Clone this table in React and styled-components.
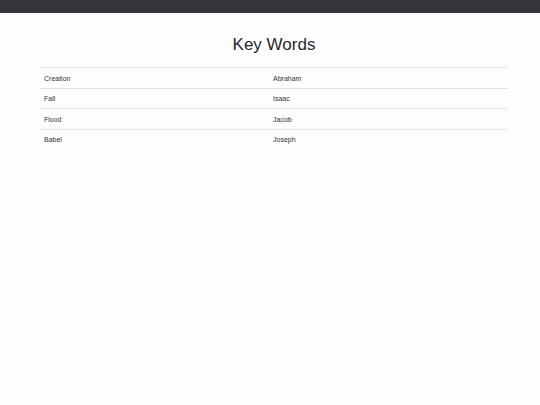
import React from 'react'
import styled, { createGlobalStyle } from 'styled-components'

const GlobalStyle = createGlobalStyle`
    html, body {
        margin: 0;
        padding: 0;
        background: #fdfdfd;
        font-family: "Liberation Sans", Arial, sans-serif;
        color: #212529;
    }
`

const TopBar = styled.div`
    height: 13px;
    background: #35373c;
`

const Container = styled.div`
    padding: 0 32px 0 40px;
`

const Title = styled.h1`
    margin: 22px 0 12px 0;
    font-size: 17px;
    font-weight: 400;
    line-height: 20px;
    text-align: center;
    color: #26282b;
`

const Table = styled.table`
    width: 100%;
    border-collapse: collapse;
    table-layout: fixed;
`

const Col = styled.col`
    width: ${props => props.$width || 'auto'};
`

const Cell = styled.td`
    border-top: 1px solid #e3e5e8;
    padding: 5.5px 4px 4px 4px;
    font-size: 7px;
    line-height: 10px;
    color: #333;
    text-align: left;
`

const rows = [
    ['Creation', 'Abraham'],
    ['Fall', 'Isaac'],
    ['Flood', 'Jacob'],
    ['Babel', 'Joseph'],
]

const App = () => {
    return (
        <>
            <GlobalStyle />
            <TopBar />
            <Container>
                <Title>Key Words</Title>
                <Table>
                    <colgroup>
                        <Col $width="229px" />
                        <Col />
                    </colgroup>
                    <tbody>
                        {rows.map(([a, b]) => (
                            <tr key={a}>
                                <Cell>{a}</Cell>
                                <Cell>{b}</Cell>
                            </tr>
                        ))}
                    </tbody>
                </Table>
            </Container>
        </>
    )
}

export default App
